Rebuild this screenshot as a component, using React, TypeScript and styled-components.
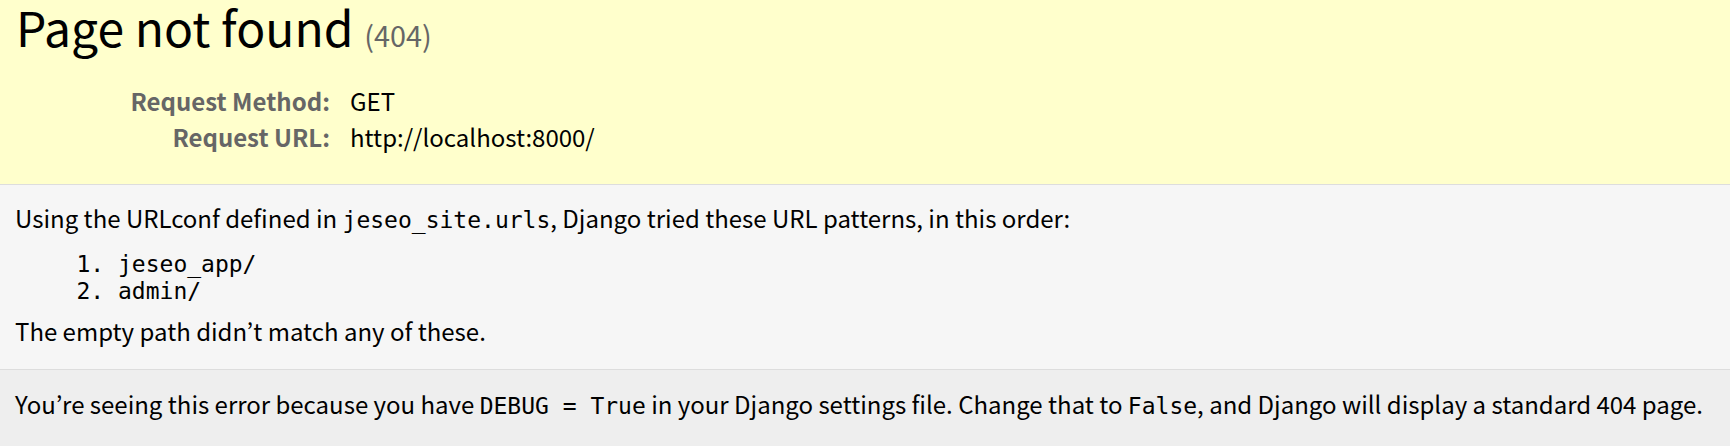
import React from "react";
import styled, { createGlobalStyle } from "styled-components";

const GlobalStyle = createGlobalStyle`
  * { margin: 0; padding: 0; box-sizing: border-box; }
  html, body { background: #eee; }
  body {
    font-family: "Noto Sans CJK KR", "Noto Sans", sans-serif;
    font-size: 24px;
    color: #000;
  }
`;

const Section = styled.div<{ $bg: string; $last?: boolean }>`
  background: ${(p) => p.$bg};
  border-bottom: ${(p) => (p.$last ? "none" : "1px solid #ddd")};
  padding: 0 15px;
`;

const Summary = styled(Section)`
  padding-bottom: 29px;
`;

const Title = styled.h1`
  font-size: 48px;
  font-weight: normal;
  line-height: 52px;
  padding-left: 1px;

  small {
    font-size: 60%;
    color: #666;
  }
`;

const MetaTable = styled.table`
  border-collapse: collapse;
  margin-top: 22px;
  line-height: 36px;

  th {
    width: 315px;
    text-align: right;
    color: #666;
    font-weight: bold;
  }

  td {
    padding-left: 20px;
  }
`;

const Info = styled(Section)`
  padding-top: 15px;
  padding-bottom: 20px;
`;

const Line = styled.p`
  line-height: 36px;
`;

const Code = styled.code`
  font-family: "DejaVu Sans Mono", monospace;
  font-size: 23px;
`;

const Patterns = styled.ol`
  margin: 13px 0 8px 103px;

  li {
    font-family: "DejaVu Sans Mono", monospace;
    font-size: 23px;
    line-height: 27px;
  }
`;

const Explanation = styled(Section)`
  padding-top: 16px;
  padding-bottom: 40px;
`;

export default function App() {
  return (
    <>
      <GlobalStyle />
      <Summary $bg="#ffc">
        <Title>
          Page not found <small>(404)</small>
        </Title>
        <MetaTable>
          <tbody>
            <tr>
              <th>Request Method:</th>
              <td>GET</td>
            </tr>
            <tr>
              <th>Request URL:</th>
              <td>http://localhost:8000/</td>
            </tr>
          </tbody>
        </MetaTable>
      </Summary>
      <Info $bg="#f6f6f6">
        <Line>
          Using the URLconf defined in <Code>jeseo_site.urls</Code>, Django
          tried these URL patterns, in this order:
        </Line>
        <Patterns>
          <li>jeseo_app/</li>
          <li>admin/</li>
        </Patterns>
        <Line>The empty path didn’t match any of these.</Line>
      </Info>
      <Explanation $bg="#eee" $last>
        <Line>
          You’re seeing this error because you have <Code>DEBUG = True</Code>{" "}
          in your Django settings file. Change that to <Code>False</Code>, and
          Django will display a standard 404 page.
        </Line>
      </Explanation>
    </>
  );
}
